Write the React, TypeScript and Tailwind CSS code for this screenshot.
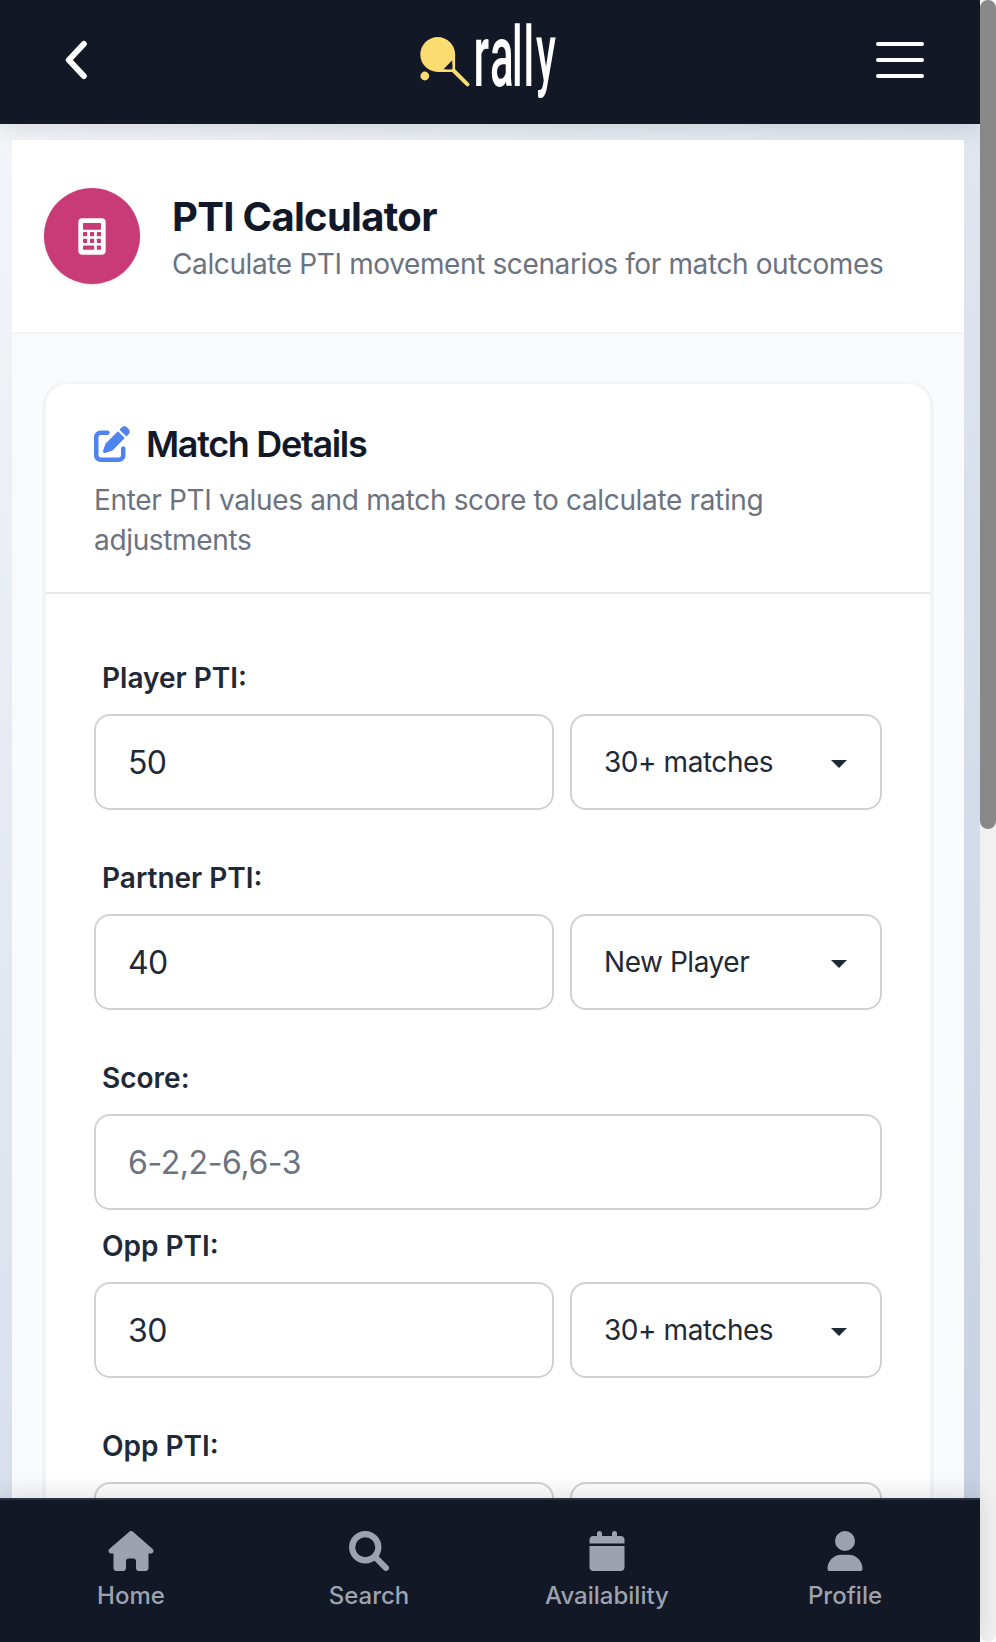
import type { ReactNode } from "react";
import { FaCalendar, FaHouse, FaUser } from "react-icons/fa6";

function Logo() {
  return (
    <svg width="144" height="124" viewBox="418 0 144 124" aria-label="rally">
      <circle cx="437.7" cy="54.5" r="17.4" fill="#fadc70" />
      <path d="M438 70.6H453.7V54" fill="none" stroke="#fadc70" strokeWidth="2.8" />
      <path d="M443.5 69.2H452.2V60.3Z" fill="#121826" />
      <path d="M453.5 70.5L467.5 84.3" stroke="#fadc70" strokeWidth="4" strokeLinecap="round" />
      <circle cx="424.8" cy="76" r="4.4" fill="#fadc70" />
      <text
        transform="translate(473.5 86) scale(0.5 1)"
        y="0"
        fill="#fff"
        className="font-['Roboto',sans-serif] text-[83px] font-medium"
      >
        <tspan x="0 33" fontSize="88">ra</tspan>
        <tspan x="77 100">ll</tspan>
        <tspan x="125" y="-5" fontSize="81">y</tspan>
      </text>
    </svg>
  );
}

function CalculatorIcon() {
  return (
    <svg width="28" height="37" viewBox="0 0 84 111">
      <rect x="1" y="1" width="82" height="109" rx="12" fill="#fff" />
      <g fill="#c93b76">
        <rect x="15" y="15" width="54" height="20" rx="2" />
        <rect x="15" y="42" width="12.5" height="13" rx="2" />
        <rect x="36" y="42" width="12.5" height="13" rx="2" />
        <rect x="56.500" y="42" width="12.5" height="13" rx="2" />
        <rect x="15" y="62" width="12.5" height="13" rx="2" />
        <rect x="36" y="62" width="12.5" height="13" rx="2" />
        <rect x="56.500" y="62" width="12.5" height="13" rx="2" />
        <rect x="15" y="82.500" width="33.5" height="13" rx="2" />
        <rect x="56.500" y="82.500" width="12.5" height="13" rx="2" />
      </g>
    </svg>
  );
}

function EditIcon() {
  return (
    <svg width="36" height="36" viewBox="0 0 512 512" fill="#4f83f1">
      <path d="M490.3 40.4C512.2 62.27 512.2 97.73 490.3 119.6L460.3 149.7L362.3 51.72L392.4 21.66C414.3-.2135 449.8-.2135 471.7 21.66L490.3 40.4zM172.4 241.7L339.7 74.34L437.7 172.3L270.3 339.6C264.2 345.8 256.7 350.4 248.4 353.2L159.6 382.8C150.1 385.6 141.5 383.4 135 376.1C128.6 370.5 126.4 361 129.2 352.4L158.8 263.6C161.6 255.3 166.2 247.8 172.4 241.7V241.7zM192 63.1C209.7 63.1 224 78.33 224 95.1C224 113.7 209.7 127.1 192 127.1H96C78.33 127.1 64 142.3 64 159.1V416C64 433.7 78.33 448 96 448H352C369.7 448 384 433.7 384 416V319.1C384 302.3 398.3 287.1 416 287.1C433.7 287.1 448 302.3 448 319.1V416C448 469 405 512 352 512H96C42.98 512 0 469 0 416V159.1C0 106.1 42.98 63.1 96 63.1H192z" />
    </svg>
  );
}

function SearchIcon() {
  return (
    <svg width="40" height="40" viewBox="0 0 512 512" fill="none" stroke="currentColor">
      <circle cx="208" cy="208" r="168" strokeWidth="79" />
      <path d="M335 335L472 472" strokeWidth="79" strokeLinecap="round" />
    </svg>
  );
}

function Label({ children }: { children: ReactNode }) {
  return <div className="h-[56px] pl-2 text-[28px] leading-[40px] font-semibold">{children}</div>;
}

function Select({ value }: { value: string }) {
  return (
    <div className="flex h-24 w-[312px] items-center justify-between rounded-2xl border-2 border-[#d1d1d6] bg-white pr-[33px] pl-8 text-[28px] tracking-[-0.45px]">
      <span>{value}</span>
      <svg width="16" height="8" viewBox="0 0 16 8" className="mt-1">
        <path d="M0 0H16L8 8Z" fill="#1f2937" />
      </svg>
    </div>
  );
}

function PtiRow({ label, value, option }: { label: string; value?: string; option?: string }) {
  return (
    <div className="h-[200px] shrink-0">
      <Label>{label}</Label>
      <div className="flex gap-4">
        <div className="flex h-24 w-[460px] items-center rounded-2xl border-2 border-[#d1d1d6] bg-white pt-0.5 pl-8 text-[32px] tracking-[-0.6px]">
          {value}
        </div>
        {option ? (
          <Select value={option} />
        ) : (
          <div className="h-24 w-[312px] rounded-2xl border-2 border-[#d1d1d6] bg-white" />
        )}
      </div>
    </div>
  );
}

function NavItem({ icon, label }: { icon: ReactNode; label: string }) {
  return (
    <div className="flex w-[238px] flex-col items-center text-[40px] text-[#9ca3af]">
      {icon}
      <span className="mt-[9px] text-2xl leading-8 font-medium">{label}</span>
    </div>
  );
}

export default function App() {
  return (
    <div className="flex h-[1642px] w-[996px] overflow-hidden bg-white font-['Inter','Liberation_Sans',sans-serif] text-[#1f2937]">
      <div className="flex w-[980px] flex-col bg-[linear-gradient(135deg,#f5f7fa_0%,#c3cfe2_100%)]">
        <header className="flex h-[124px] shrink-0 items-center bg-[#121826] pr-14 pl-[60px] shadow-[0_4px_24px_rgba(0,0,0,0.12)]">
          <div className="w-[358px]">
            <svg width="32" height="44" viewBox="60 38 32 44" className="-mt-1">
              <path
                d="M83.800 44L68.800 60L83.800 76"
                fill="none"
                stroke="#fff"
                strokeWidth="6"
                strokeLinecap="round"
                strokeLinejoin="round"
              />
            </svg>
          </div>
          <Logo />
          <div className="-mt-1 ml-auto flex flex-col gap-3">
            <div className="h-1 w-12 rounded-full bg-white" />
            <div className="h-1 w-12 rounded-full bg-white" />
            <div className="h-1 w-12 rounded-full bg-white" />
          </div>
        </header>

        <main className="mt-4 mr-4 ml-3 flex min-h-0 flex-1 flex-col overflow-hidden bg-[#f9fafc]">
          <section className="flex h-[194px] shrink-0 items-start border-b-2 border-[#f3f4f6] bg-white pt-12 pl-8">
            <div className="flex size-24 shrink-0 items-center justify-center rounded-full bg-[#c93b76] shadow-sm">
              <CalculatorIcon />
            </div>
            <div className="ml-8 pt-1">
              <h1 className="text-[40px] leading-[50px] font-bold tracking-[-0.7px] text-[#111827]">PTI Calculator</h1>
              <p className="text-[28px] leading-[44px] tracking-[-0.38px] whitespace-nowrap text-[#6b7280]">
                Calculate PTI movement scenarios for match outcomes
              </p>
            </div>
          </section>

          <section className="mx-8 mt-12 flex min-h-0 flex-1 flex-col overflow-hidden rounded-t-3xl border-x-2 border-t-2 border-[#f3f4f6] bg-white shadow-sm">
            <div className="h-[210px] shrink-0 border-b-2 border-[#e5e7eb] px-12 pt-9">
              <div className="flex h-12 items-center">
                <EditIcon />
                <h2 className="ml-4 text-[36px] leading-[48px] font-semibold tracking-[-1.34px] text-[#111827]">
                  Match Details
                </h2>
              </div>
              <p className="mt-3 w-[720px] text-[28px] leading-[40px] tracking-[-0.34px] text-[#6b7280]">
                Enter PTI values and match score to calculate rating adjustments
              </p>
            </div>
            <div className="flex min-h-0 flex-1 flex-col px-12 pt-16">
              <PtiRow label="Player PTI:" value="50" option="30+ matches" />
              <PtiRow label="Partner PTI:" value="40" option="New Player" />
              <div className="h-[168px] shrink-0">
                <Label>Score:</Label>
                <div className="flex h-24 w-[788px] items-center rounded-2xl border-2 border-[#d1d1d6] bg-white pt-0.5 pl-8 text-[32px] tracking-[-0.4px] text-[#6b7280]">
                  6-2,2-6,6-3
                </div>
              </div>
              <PtiRow label="Opp PTI:" value="30" option="30+ matches" />
              <PtiRow label="Opp PTI:" />
            </div>
          </section>
        </main>

        <nav className="relative flex h-[144px] shrink-0 justify-center border-t-2 border-[#2a3241] bg-[#121826] pt-[31px] pr-1 shadow-[0_-4px_24px_rgba(0,0,0,0.12)]">
          <NavItem icon={<FaHouse className="w-[46px]" />} label="Home" />
          <NavItem icon={<SearchIcon />} label="Search" />
          <NavItem icon={<FaCalendar />} label="Availability" />
          <NavItem icon={<FaUser />} label="Profile" />
        </nav>
      </div>
      <div className="w-4 rounded-lg bg-[#f1f1f1]">
        <div className="h-[829px] rounded-lg bg-[#888888]" />
      </div>
    </div>
  );
}
